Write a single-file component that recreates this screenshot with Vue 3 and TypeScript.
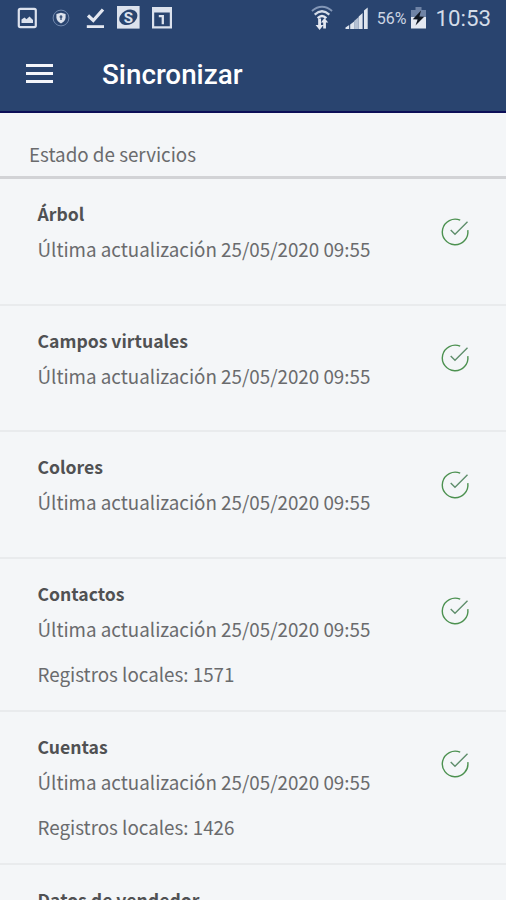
<script setup lang="ts">
interface Service {
  name: string
  updated: string
  records?: number
}

const stamp = '25/05/2020 09:55'
const services: Service[] = [
  { name: 'Árbol', updated: stamp },
  { name: 'Campos virtuales', updated: stamp },
  { name: 'Colores', updated: stamp },
  { name: 'Contactos', updated: stamp, records: 1571 },
  { name: 'Cuentas', updated: stamp, records: 1426 },
  { name: 'Datos de vendedor', updated: stamp },
]
</script>

<template>
  <div class="screen">
    <header class="top">
      <div class="status">
        <div class="notices">
          <svg class="picture" width="20" height="22" viewBox="0 0 20 22">
            <rect x="1.8" y="1.9" width="17" height="18.200" rx="1.5" fill="none" stroke="#dce2ed" stroke-width="2.2" />
            <path d="M4.500 16v-3.500l3-2 2 1.700L12.500 9.500l3.500 3.500v3z" fill="#dce2ed" />
          </svg>
          <svg class="shield" width="18" height="18" viewBox="0 0 18 18">
            <circle cx="9" cy="9" r="7.9" fill="none" stroke="#7188ad" stroke-width="1" />
            <path d="M9 3.800l4.600 1.300v3.500c0 2.600-2 4.600-4.600 5.900-2.600-1.300-4.600-3.300-4.600-5.900V5.100z" fill="#dce2ed" />
            <path d="M9 6.300a1.500 1.500 0 0 1 .7 2.800V11H8.300V9.100A1.500 1.500 0 0 1 9 6.300z" fill="#41597f" />
          </svg>
          <svg class="done" width="19" height="22" viewBox="0 0 19 22">
            <path d="M2 8.500l5.300 5L17 2.500" fill="none" stroke="#e4e8f1" stroke-width="3.200" />
            <path d="M.8 19.600h17.200" stroke="#e4e8f1" stroke-width="2.800" />
          </svg>
          <svg class="coin" width="23" height="23" viewBox="0 0 23 23">
            <rect width="22.600" height="22.600" fill="#dce2ed" />
            <ellipse cx="11.300" cy="11.300" rx="9.500" ry="7.200" transform="rotate(-28 11.300 11.300)" fill="#29446f" />
            <text x="11.300" y="16.600" text-anchor="middle" class="dollar">S</text>
          </svg>
          <svg class="calendar" width="20" height="22" viewBox="0 0 20 22">
            <path d="M0 0h20v21.500H0zM2.200 5.500v13.800h15.600V5.500z" fill="#dce2ed" fill-rule="evenodd" />
            <path d="M6.800 9.200h4v8" fill="none" stroke="#dce2ed" stroke-width="2.300" />
          </svg>
        </div>
        <div class="device">
          <svg class="wifi" width="22" height="26" viewBox="0 0 24 26" preserveAspectRatio="none">
            <g fill="none" stroke-linecap="butt">
              <path d="M1 6Q12-2.500 23 6" stroke="#8397b7" stroke-width="2" />
              <path d="M4 9.600Q12 3 20 9.600" stroke="#d4dce8" stroke-width="2.300" />
              <path d="M7.200 13.200Q12 8.800 16.800 13.200" stroke="#e4e8f1" stroke-width="2.300" />
            </g>
            <path d="M10.900 13.500H7.800v6.500H5l4.400 5 4.200-5h-2.700zM14.700 13l-3.900 4.500h2.500V23.500h3V17.500h2.500z" fill="#e4e8f1" />
          </svg>
          <svg class="signal" width="24" height="23" viewBox="0 0 24 23">
            <path d="M.5 22v-1.500l3.700-2.500V22zM5.200 22v-4.500l3.900-3V22z" fill="#dfe5ee" />
            <path d="M9.100 22V14l4.600-4v12z" fill="#b5c1d3" />
            <path d="M13.700 22V9.500l3.900-3.500V22zM19 22V3.500L22.700.5V22z" fill="#dfe5ee" />
          </svg>
          <span class="percent">56%</span>
          <svg class="battery" width="15" height="22" viewBox="0 0 15 22">
            <path d="M4.500 0h6v3H15v8H0V3h4.500z" fill="#6f83a5" />
            <path d="M0 10h15v11.500H0z" fill="#e4e8f1" />
            <path d="M10 3.500L1.800 12.300l4.800.3L4.500 18.500l8.700-8.800-4.800-.2z" fill="#101722" />
          </svg>
          <span class="clock">10:53</span>
        </div>
      </div>
      <div class="toolbar">
        <button class="menu" type="button" aria-label="Menú"><i /><i /><i /></button>
        <h1>Sincronizar</h1>
      </div>
    </header>

    <h2 class="section">Estado de servicios</h2>

    <ul class="list">
      <li v-for="s in services" :key="s.name" class="row" :class="{ tall: s.records !== undefined }">
        <div class="info">
          <strong class="name">{{ s.name }}</strong>
          <span class="line">Última actualización {{ s.updated }}</span>
          <span v-if="s.records !== undefined" class="line records">Registros locales: {{ s.records }}</span>
        </div>
        <svg class="check" width="30" height="30" viewBox="0 0 30 30" fill="none">
          <path d="M20.200 3.200A12.800 12.800 0 1 0 27.800 13.200" stroke="#4c9150" stroke-width="1.400" />
          <path d="M10.700 13l4.300 4.200L27.500 4.800" stroke="#5f8e6c" stroke-width="1.400" />
        </svg>
      </li>
    </ul>
  </div>
</template>

<style>
body {
  background: #f4f6f8;
}
</style>

<style scoped>
.screen {
  height: 900px;
  overflow: hidden;
  background: #f4f6f8;
  color: #6a6b6d;
  font-family: "Noto Sans CJK SC", "Noto Sans", sans-serif;
}
.top {
  box-sizing: border-box;
  height: 113px;
  background: #29446f;
  border-bottom: 2px solid #0c0f58;
  font-family: Roboto, sans-serif;
}
.status {
  display: flex;
  justify-content: space-between;
  height: 36px;
  padding: 0 15px 0 17px;
}
.notices,
.device {
  display: flex;
  align-items: center;
}
.notices { padding-bottom: 1px; }
.shield { margin-left: 15px; }
.done { margin-left: 16px; }
.coin { margin-left: 12px; }
.calendar { margin-left: 12px; }
.dollar {
  font: bold 15px Roboto, sans-serif;
  fill: #dce2ed;
}
.signal { margin-left: 12px; }
.percent {
  margin-left: 8px;
  padding-top: 1px;
  font-size: 16px;
  line-height: 35px;
  color: #ccd5e3;
}
.battery { margin-left: 5px; }
.clock {
  margin-left: 9px;
  font-size: 22.300px;
  line-height: 36px;
  color: #d4dce8;
}
.toolbar {
  display: flex;
  align-items: center;
  height: 77px;
  padding: 0 26px;
}
.menu {
  display: flex;
  flex-direction: column;
  gap: 5px;
  width: 27px;
  margin: 0 49px 3px 0;
  padding: 0;
  border: 0;
  background: none;
}
.menu i {
  height: 3px;
  background: #f4f6fb;
}
h1 {
  margin: 0;
  padding-top: 1px;
  font-size: 27.800px;
  font-weight: 500;
  line-height: 32px;
  color: #fff;
}
.section {
  box-sizing: border-box;
  height: 66px;
  margin: 0;
  padding: 26px 29px 0;
  border-bottom: 3px solid #d2d3d6;
  font-size: 18.800px;
  font-weight: 400;
  line-height: 30px;
}
.list {
  margin: 0;
  padding: 0;
  list-style: none;
}
.row {
  box-sizing: border-box;
  display: flex;
  justify-content: space-between;
  height: 126.600px;
  padding: 17px 36px 0 37.500px;
  border-bottom: 2px solid #e9ebed;
}
.row.tall {
  height: 153px;
}
.info {
  display: flex;
  flex-direction: column;
}
.name {
  font-size: 17.600px;
  line-height: 36px;
  color: #505153;
}
.line {
  margin-top: -1px;
  font-size: 18.800px;
  line-height: 36px;
  white-space: nowrap;
}
.line.records {
  margin-top: 9px;
}
.check {
  margin-top: 20.500px;
}
</style>
